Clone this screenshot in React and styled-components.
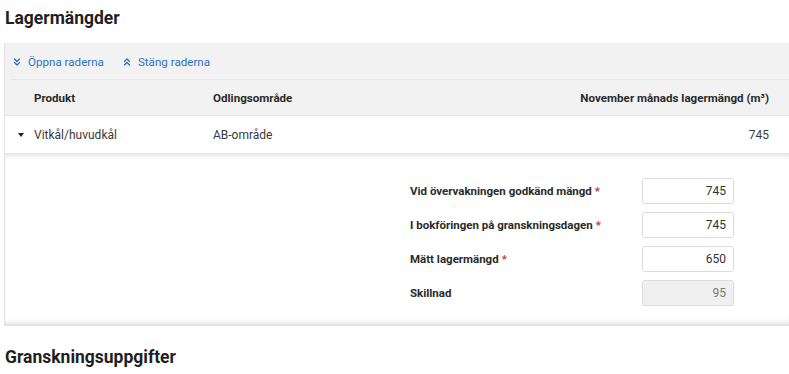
import React from "react";
import styled, { createGlobalStyle } from "styled-components";
import { ChevronsDown, ChevronsUp } from "lucide-react";

const GlobalStyle = createGlobalStyle`
  body {
    margin: 0;
    background: #ffffff;
    font-family: Roboto, "Liberation Sans", Arial, sans-serif;
    color: #333333;
  }
`;

const Page = styled.div`
  padding: 0 0 0 4px;
  overflow: hidden;
`;

const SectionTitle = styled.h2`
  margin: 0;
  padding-left: 1px;
  font-size: 17.5px;
  font-weight: 700;
  color: #1f1f1f;
  line-height: 20px;
  padding-top: ${(p) => p.$top || 0}px;
  height: ${(p) => p.$height}px;
`;

const Panel = styled.div`
  border-left: 1px solid #e2e2e2;
  background: #f2f2f2;
`;

const Toolbar = styled.div`
  margin-left: 6px;
  padding-top: 1px;
  height: 35px;
  display: flex;
  align-items: center;
  gap: 17px;
  border-bottom: 1px solid #e6e6e6;
`;

const ToolLink = styled.span`
  display: flex;
  align-items: center;
  gap: 5px;
  color: #2c72c2;
  font-size: 11.6px;
  cursor: pointer;
`;

const Row = styled.div`
  display: grid;
  grid-template-columns: 29px 179px 1fr auto;
  align-items: center;
  height: ${(p) => (p.$head ? 35 : 37)}px;
  padding-right: 20px;
  background: ${(p) => (p.$head ? "#f2f2f2" : "#ffffff")};
  border-bottom: ${(p) => (p.$head ? "1px solid #e6e6e6" : "none")};
  font-size: ${(p) => (p.$head ? 11.6 : 12)}px;
  font-weight: ${(p) => (p.$head ? 700 : 400)};
  color: ${(p) => (p.$head ? "#2b2b2b" : "#3a3a3a")};
`;

const Caret = styled.span`
  justify-self: center;
  margin-left: 2px;
  width: 0;
  height: 0;
  border-left: 3.5px solid transparent;
  border-right: 3.5px solid transparent;
  border-top: 4px solid #222;
`;

const Cell = styled.span`
  text-align: ${(p) => (p.$right ? "right" : "left")};
`;

const Expanded = styled.div`
  background: #ffffff;
  height: 173px;
  box-shadow: inset 0 7px 6px -5px rgba(0, 0, 0, 0.14),
    inset 0 -7px 6px -5px rgba(0, 0, 0, 0.17);
  padding: 25px 0 0 405px;
  box-sizing: border-box;
`;

const Form = styled.div`
  display: grid;
  grid-template-columns: 232px 92px;
  row-gap: 8px;
  align-items: center;
`;

const Label = styled.label`
  font-size: 11.5px;
  font-weight: 700;
  color: #2b2b2b;
`;

const Req = styled.span`
  color: #c0392b;
  margin-left: 3px;
`;

const Input = styled.div`
  height: 26px;
  box-sizing: border-box;
  border: 1px solid #dcdcdc;
  border-radius: 3px;
  background: ${(p) => (p.$disabled ? "#f0f0f0" : "#ffffff")};
  color: ${(p) => (p.$disabled ? "#777777" : "#333333")};
  font-size: 12px;
  display: flex;
  align-items: center;
  justify-content: flex-end;
  padding-right: 7px;
`;

const fields = [
  { label: "Vid övervakningen godkänd mängd", value: "745", required: true },
  { label: "I bokföringen på granskningsdagen", value: "745", required: true },
  { label: "Mätt lagermängd", value: "650", required: true },
  { label: "Skillnad", value: "95", disabled: true },
];

const App = () => {
  return (
    <Page>
      <GlobalStyle />
      <SectionTitle $top={8} $height={35}>Lagermängder</SectionTitle>
      <Panel>
        <Toolbar>
          <ToolLink>
            <ChevronsDown size={12} strokeWidth={2.5} />
            Öppna raderna
          </ToolLink>
          <ToolLink>
            <ChevronsUp size={12} strokeWidth={2.5} />
            Stäng raderna
          </ToolLink>
        </Toolbar>
        <Row $head>
          <span />
          <Cell>Produkt</Cell>
          <Cell>Odlingsområde</Cell>
          <Cell $right>November månads lagermängd (m³)</Cell>
        </Row>
        <Row>
          <Caret />
          <Cell>Vitkål/huvudkål</Cell>
          <Cell>AB-område</Cell>
          <Cell $right>745</Cell>
        </Row>
        <Expanded>
          <Form>
            {fields.map((f) => (
              <React.Fragment key={f.label}>
                <Label>
                  {f.label}
                  {f.required && <Req>*</Req>}
                </Label>
                <Input $disabled={f.disabled}>{f.value}</Input>
              </React.Fragment>
            ))}
          </Form>
        </Expanded>
      </Panel>
      <SectionTitle $top={21} $height={40}>Granskningsuppgifter</SectionTitle>
    </Page>
  );
};

export default App;
